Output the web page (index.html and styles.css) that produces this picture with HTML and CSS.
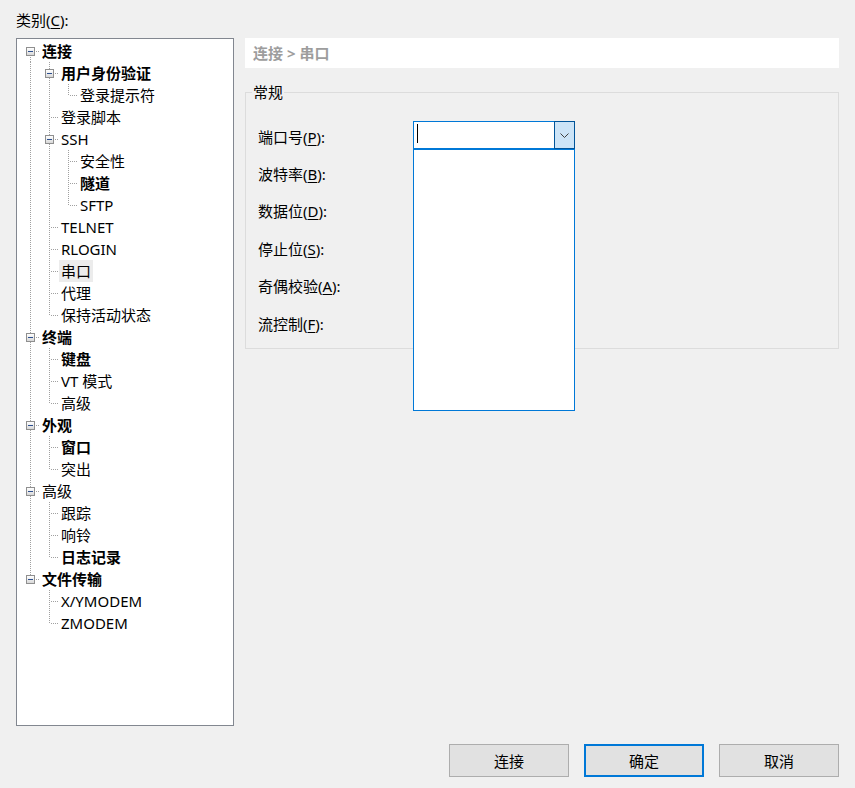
FILE: index.html
```html
<!DOCTYPE html>
<html lang="zh-CN">
<head>
<meta charset="utf-8">
<title>会话选项</title>
<link rel="stylesheet" href="styles.css">
</head>
<body>
<div class="dialog">
  <div class="cat-label">类别(<u>C</u>):</div>
  <div class="main">
    <div class="tree">
      <div class="row"><span class="c first"><span class="x"></span></span><span class="lbl b">连接</span></div>
      <div class="row"><span class="c v"></span><span class="c tee"><span class="x"></span></span><span class="lbl b">用户身份验证</span></div>
      <div class="row"><span class="c v"></span><span class="c v"></span><span class="c end"></span><span class="lbl">登录提示符</span></div>
      <div class="row"><span class="c v"></span><span class="c tee"></span><span class="lbl">登录脚本</span></div>
      <div class="row"><span class="c v"></span><span class="c tee"><span class="x"></span></span><span class="lbl">SSH</span></div>
      <div class="row"><span class="c v"></span><span class="c v"></span><span class="c tee"></span><span class="lbl">安全性</span></div>
      <div class="row"><span class="c v"></span><span class="c v"></span><span class="c tee"></span><span class="lbl b">隧道</span></div>
      <div class="row"><span class="c v"></span><span class="c v"></span><span class="c end"></span><span class="lbl">SFTP</span></div>
      <div class="row"><span class="c v"></span><span class="c tee"></span><span class="lbl">TELNET</span></div>
      <div class="row"><span class="c v"></span><span class="c tee"></span><span class="lbl">RLOGIN</span></div>
      <div class="row"><span class="c v"></span><span class="c tee"></span><span class="lbl sel">串口</span></div>
      <div class="row"><span class="c v"></span><span class="c tee"></span><span class="lbl">代理</span></div>
      <div class="row"><span class="c v"></span><span class="c end"></span><span class="lbl">保持活动状态</span></div>
      <div class="row"><span class="c tee"><span class="x"></span></span><span class="lbl b">终端</span></div>
      <div class="row"><span class="c v"></span><span class="c tee"></span><span class="lbl b">键盘</span></div>
      <div class="row"><span class="c v"></span><span class="c tee"></span><span class="lbl">VT 模式</span></div>
      <div class="row"><span class="c v"></span><span class="c end"></span><span class="lbl">高级</span></div>
      <div class="row"><span class="c tee"><span class="x"></span></span><span class="lbl b">外观</span></div>
      <div class="row"><span class="c v"></span><span class="c tee"></span><span class="lbl b">窗口</span></div>
      <div class="row"><span class="c v"></span><span class="c end"></span><span class="lbl">突出</span></div>
      <div class="row"><span class="c tee"><span class="x"></span></span><span class="lbl">高级</span></div>
      <div class="row"><span class="c v"></span><span class="c tee"></span><span class="lbl">跟踪</span></div>
      <div class="row"><span class="c v"></span><span class="c tee"></span><span class="lbl">响铃</span></div>
      <div class="row"><span class="c v"></span><span class="c end"></span><span class="lbl b">日志记录</span></div>
      <div class="row"><span class="c end"><span class="x"></span></span><span class="lbl b">文件传输</span></div>
      <div class="row"><span class="c"></span><span class="c tee"></span><span class="lbl">X/YMODEM</span></div>
      <div class="row"><span class="c"></span><span class="c end"></span><span class="lbl">ZMODEM</span></div>
    </div>
    <div class="panel">
      <div class="crumb">连接 &gt; 串口</div>
      <fieldset class="group">
        <legend class="legend">常规</legend>
        <div class="frow">
          <span class="flabel">端口号(<u>P</u>):</span>
          <div class="combo">
            <span class="caret"></span>
            <span class="dd-btn"><svg width="9" height="5" viewBox="0 0 9 5"><polyline points="0.5,0.5 4.5,4.5 8.5,0.5" fill="none" stroke="#404040" stroke-width="1"/></svg></span>
            <div class="dd-list"></div>
          </div>
        </div>
        <div class="frow"><span class="flabel">波特率(<u>B</u>):</span></div>
        <div class="frow"><span class="flabel">数据位(<u>D</u>):</span></div>
        <div class="frow"><span class="flabel">停止位(<u>S</u>):</span></div>
        <div class="frow"><span class="flabel">奇偶校验(<u>A</u>):</span></div>
        <div class="frow"><span class="flabel">流控制(<u>F</u>):</span></div>
      </fieldset>
    </div>
  </div>
  <div class="buttons">
    <button class="btn">连接</button>
    <button class="btn default">确定</button>
    <button class="btn">取消</button>
  </div>
</div>
</body>
</html>
```

FILE: styles.css
```css
html, body {
  margin: 0;
  padding: 0;
  background: #f0f0f0;
}
body {
  font-family: "Noto Sans", "Noto Sans CJK SC", sans-serif;
  font-size: 15px;
  color: #000;
}
.dialog {
  width: 855px;
  height: 788px;
  box-sizing: border-box;
  padding: 10px 16px 0 16px;
}
.cat-label {
  height: 20px;
  line-height: 20px;
  margin-bottom: 8px;
}
u {
  text-decoration: underline;
  text-underline-offset: 2px;
}
.main {
  display: flex;
  gap: 11px;
  height: 688px;
}
.tree {
  width: 218px;
  height: 688px;
  box-sizing: border-box;
  border: 1px solid #828790;
  background: #fff;
  padding: 1px 0 0 3px;
  flex: none;
}
.row {
  display: flex;
  height: 22px;
}
.c {
  position: relative;
  width: 19px;
  height: 22px;
  flex: none;
}
.v::before, .tee::before, .end::before, .first::before {
  content: "";
  position: absolute;
  left: 10px;
  top: 0;
  width: 1px;
  height: 22px;
  background: repeating-linear-gradient(to bottom, #a0a0a0 0 1px, transparent 1px 2px);
}
.end::before {
  height: 12px;
}
.first::before {
  top: 11px;
  height: 11px;
}
.tee::after, .end::after, .first::after {
  content: "";
  position: absolute;
  left: 11px;
  top: 11px;
  width: 8px;
  height: 1px;
  background: repeating-linear-gradient(to right, transparent 0 1px, #a0a0a0 1px 2px);
}
.x {
  position: absolute;
  left: 6px;
  top: 7px;
  width: 9px;
  height: 9px;
  box-sizing: border-box;
  border: 1px solid #8f8f8f;
  background: linear-gradient(#ffffff, #d8d8d8);
  z-index: 1;
}
.x::after {
  content: "";
  position: absolute;
  left: 1px;
  top: 3px;
  width: 5px;
  height: 1px;
  background: #2d4f8f;
}
.lbl {
  margin-left: 1px;
  padding: 0 2px;
  line-height: 22px;
  height: 22px;
  white-space: nowrap;
}
.b {
  font-weight: 700;
}
.sel {
  background: #ececec;
}
.panel {
  flex: 1;
  display: flex;
  flex-direction: column;
}
.crumb {
  height: 30px;
  line-height: 30px;
  background: #fff;
  color: #9d9d9d;
  font-weight: 700;
  padding-left: 8px;
}
.group {
  margin: 14px 0 0 0;
  border: 1px solid #dcdcdc;
  padding: 16px 0 6px 0;
  min-width: 0;
}
.legend {
  margin-left: 6px;
  padding: 0 1px;
  line-height: 20px;
  height: 20px;
}
.frow {
  display: flex;
  align-items: center;
  height: 37.4px;
  padding-left: 12px;
}
.flabel {
  width: 155px;
  flex: none;
  line-height: 20px;
}
.combo {
  position: relative;
  width: 162px;
  height: 28px;
  box-sizing: border-box;
  border: 1px solid #0078d7;
  background: #fff;
  display: flex;
  margin-bottom: 4px;
  z-index: 2;
}
.caret {
  width: 1px;
  height: 19px;
  background: #000;
  margin: 2px 0 0 3px;
}
.dd-btn {
  margin: -1px -1px -1px auto;
  width: 21px;
  height: 28px;
  box-sizing: border-box;
  border: 1px solid #005499;
  background: #cce4f7;
  display: flex;
  align-items: center;
  justify-content: center;
}
.dd-btn svg {
  display: block;
  margin-top: 1px;
}
.dd-list {
  position: absolute;
  left: -1px;
  top: calc(100% + 1px);
  width: 162px;
  height: 262px;
  box-sizing: border-box;
  border: 1px solid #0078d7;
  background: #fff;
}
.buttons {
  display: flex;
  justify-content: flex-end;
  gap: 15px;
  margin-top: 18px;
}
.btn {
  width: 120px;
  height: 33px;
  box-sizing: border-box;
  border: 1px solid #adadad;
  background: #e1e1e1;
  font-family: "Noto Sans", "Noto Sans CJK SC", sans-serif;
  font-size: 15px;
  color: #000;
  padding: 0;
  margin: 0;
}
.btn.default {
  border: 2px solid #0078d7;
}
```
